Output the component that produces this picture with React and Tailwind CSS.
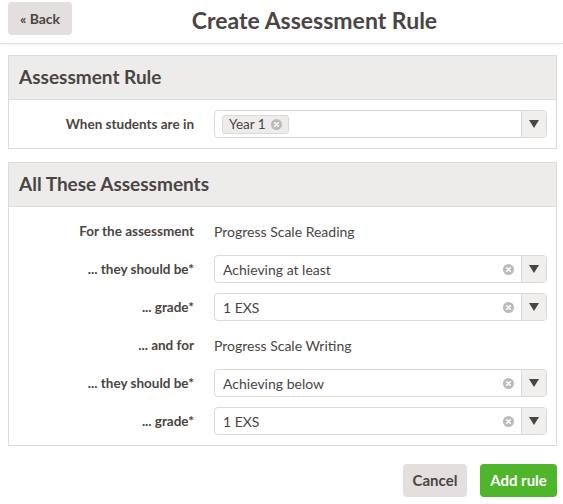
import React from "react";

const font = { fontFamily: "Lato, 'Open Sans', sans-serif" };

function Select({ value, clear = true }) {
  return (
    <div className="flex h-[28px] flex-1 items-stretch rounded-[4px] border border-[#dcdad8] bg-white">
      <div className="flex flex-1 items-center pl-[8px] text-[14px] text-[#4a4543]">
        {value}
      </div>
      {clear && (
        <div className="flex w-[26px] items-center justify-center">
          <ClearIcon />
        </div>
      )}
      <Arrow />
    </div>
  );
}

function ClearIcon() {
  return (
    <svg width="11" height="11" viewBox="0 0 12 12">
      <circle cx="6" cy="6" r="6" fill="#bdbab8" />
      <path d="M4 4 L8 8 M8 4 L4 8" stroke="#fff" strokeWidth="1.6" strokeLinecap="round" />
    </svg>
  );
}

function Arrow() {
  return (
    <div className="flex w-[25px] items-center justify-center rounded-r-[4px] border-l border-[#dcdad8] bg-[#f1efee]">
      <svg width="10" height="8" viewBox="0 0 10 8">
        <path d="M0 0 H10 L5 8 Z" fill="#4a4543" />
      </svg>
    </div>
  );
}

function Row({ label, children }) {
  return (
    <div className="flex h-[28px] items-center">
      <div className="w-[185px] text-right text-[13.5px] font-bold text-[#4a4543]">
        {label}
      </div>
      <div className="ml-[20px] mr-[9px] flex flex-1 items-center">{children}</div>
    </div>
  );
}

function Panel({ title, children }) {
  return (
    <div className="ml-[8px] mr-[6px] border border-[#dedcda]">
      <div className="flex h-[44px] items-center border-b border-[#dedcda] bg-[#eeeceb] px-[10px] text-[19px] font-bold text-[#4a4543]">
        {title}
      </div>
      <div className="flex flex-col gap-[10px] py-[10px]">{children}</div>
    </div>
  );
}

export default function App() {
  return (
    <div className="min-h-[504px] w-[563px] bg-white text-[#4a4543]" style={font}>
      {/* header */}
      <div className="relative flex h-[44px] items-start border-b border-[#e4e2e0] shadow-[0_1px_2px_rgba(0,0,0,0.06)]">
        <button className="ml-[8px] mt-[2px] h-[33px] w-[64px] rounded-[4px] bg-[#e3dfde] text-[14px] font-bold text-[#4a4543]">
          « Back
        </button>
        <div className="absolute left-[66px] right-0 top-[3px] text-center text-[23px] font-bold text-[#4a4543]">
          Create Assessment Rule
        </div>
      </div>

      <div className="mt-[11px]">
        <Panel title="Assessment Rule">
          <Row label="When students are in">
            <div className="flex h-[28px] flex-1 items-stretch rounded-[4px] border border-[#dcdad8] bg-white">
              <div className="flex flex-1 items-center pl-[7px]">
                <span className="flex h-[19px] items-center gap-[5px] rounded-[3px] border border-[#dcdad8] bg-[#eeeceb] px-[6px] text-[13.5px] text-[#4a4543]">
                  Year 1
                  <ClearIcon />
                </span>
              </div>
              <Arrow />
            </div>
          </Row>
        </Panel>
      </div>

      <div className="mt-[13px]">
        <Panel title="All These Assessments">
          <Row label="For the assessment">
            <span className="text-[14px]">Progress Scale Reading</span>
          </Row>
          <Row label="... they should be*">
            <Select value="Achieving at least" />
          </Row>
          <Row label="... grade*">
            <Select value="1 EXS" />
          </Row>
          <Row label="... and for">
            <span className="text-[14px]">Progress Scale Writing</span>
          </Row>
          <Row label="... they should be*">
            <Select value="Achieving below" />
          </Row>
          <Row label="... grade*">
            <Select value="1 EXS" />
          </Row>
        </Panel>
      </div>

      <div className="mt-[18px] flex justify-end gap-[13px] pr-[6px]">
        <button className="h-[33px] w-[64px] rounded-[4px] bg-[#e3dfde] text-[15px] font-bold text-[#4a4543]">
          Cancel
        </button>
        <button className="h-[33px] w-[77px] rounded-[4px] bg-[#4fb52a] text-[15px] font-bold text-white">
          Add rule
        </button>
      </div>
    </div>
  );
}
